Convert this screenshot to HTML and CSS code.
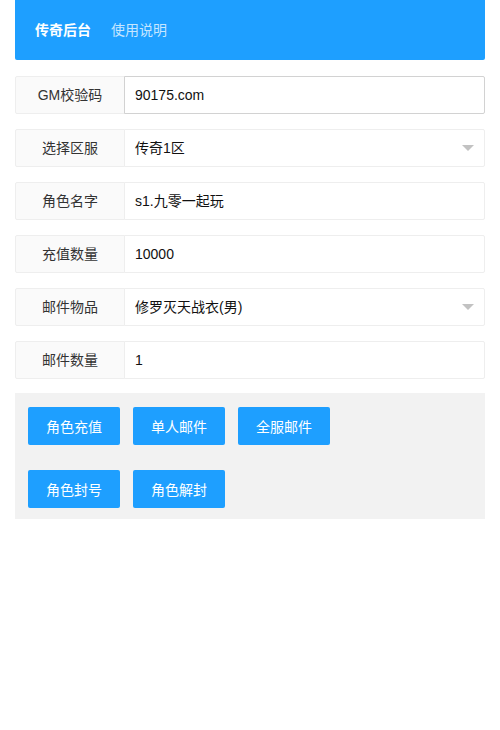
FILE: index.html
```html
<!DOCTYPE html>
<html lang="zh-CN">
<head>
<meta charset="utf-8">
<title>传奇后台</title>
<link rel="stylesheet" href="styles.css">
</head>
<body>
<div class="page">
  <ul class="nav">
    <li class="nav-item nav-this">传奇后台</li>
    <li class="nav-item">使用说明</li>
  </ul>
  <form class="form">
    <div class="form-item">
      <label class="form-label">GM校验码</label>
      <div class="input-block"><div class="input input-hover">90175.com</div></div>
    </div>
    <div class="form-item">
      <label class="form-label">选择区服</label>
      <div class="input-block"><div class="input select">传奇1区<i class="edge"></i></div></div>
    </div>
    <div class="form-item">
      <label class="form-label">角色名字</label>
      <div class="input-block"><div class="input">s1.九零一起玩</div></div>
    </div>
    <div class="form-item">
      <label class="form-label">充值数量</label>
      <div class="input-block"><div class="input">10000</div></div>
    </div>
    <div class="form-item">
      <label class="form-label">邮件物品</label>
      <div class="input-block"><div class="input select">修罗灭天战衣(男)<i class="edge"></i></div></div>
    </div>
    <div class="form-item">
      <label class="form-label">邮件数量</label>
      <div class="input-block"><div class="input">1</div></div>
    </div>
    <div class="btn-area">
      <div class="btn-row">
        <button type="button" class="btn">角色充值</button>
        <button type="button" class="btn">单人邮件</button>
        <button type="button" class="btn">全服邮件</button>
      </div>
      <div class="btn-row">
        <button type="button" class="btn">角色封号</button>
        <button type="button" class="btn">角色解封</button>
      </div>
    </div>
  </form>
</div>
</body>
</html>
```
FILE: styles.css
```css
html, body {
  margin: 0;
  padding: 0;
  background: #fff;
}
body {
  font-family: "Liberation Sans", "Noto Sans CJK SC", sans-serif;
  font-size: 14px;
  color: #333;
}
.page {
  padding: 0 15px;
}
.nav {
  list-style: none;
  margin: 0;
  padding: 0 10px;
  height: 60px;
  background: #1E9FFF;
  border-radius: 0 0 2px 2px;
  display: flex;
}
.nav-item {
  padding: 0 10px;
  line-height: 60px;
  color: rgba(255, 255, 255, 0.75);
}
.nav-this {
  color: #fff;
  font-weight: bold;
}
.form {
  margin: 16px 0 0;
  display: flex;
  flex-direction: column;
  gap: 15px;
}
.form-item {
  display: flex;
  height: 38px;
}
.form-label {
  box-sizing: border-box;
  width: 110px;
  height: 38px;
  line-height: 36px;
  text-align: center;
  background: #FAFAFA;
  border: 1px solid #eee;
  border-radius: 2px 0 0 2px;
  color: #333;
}
.input-block {
  flex: 1;
  margin-left: -1px;
}
.input {
  box-sizing: border-box;
  height: 38px;
  line-height: 36px;
  border: 1px solid #eee;
  border-radius: 0 2px 2px 0;
  padding-left: 10px;
  background: #fff;
  color: #111;
  position: relative;
}
.input-hover {
  border-color: #D2D2D2;
}
.edge {
  position: absolute;
  right: 10px;
  top: 50%;
  margin-top: -3px;
  width: 0;
  height: 0;
  border-style: solid;
  border-width: 6px 6px 0 6px;
  border-color: #c2c2c2 transparent transparent transparent;
}
.btn-area {
  margin-top: -1px;
  background: #F2F2F2;
  padding: 14px 13px 11px;
  display: flex;
  flex-direction: column;
  gap: 25px;
}
.btn-row {
  display: flex;
  gap: 13px;
}
.btn {
  height: 38px;
  width: 92px;
  padding: 0;
  border: none;
  border-radius: 2px;
  background: #1E9FFF;
  color: #fff;
  font-family: inherit;
  font-size: 14px;
  cursor: pointer;
}
```
